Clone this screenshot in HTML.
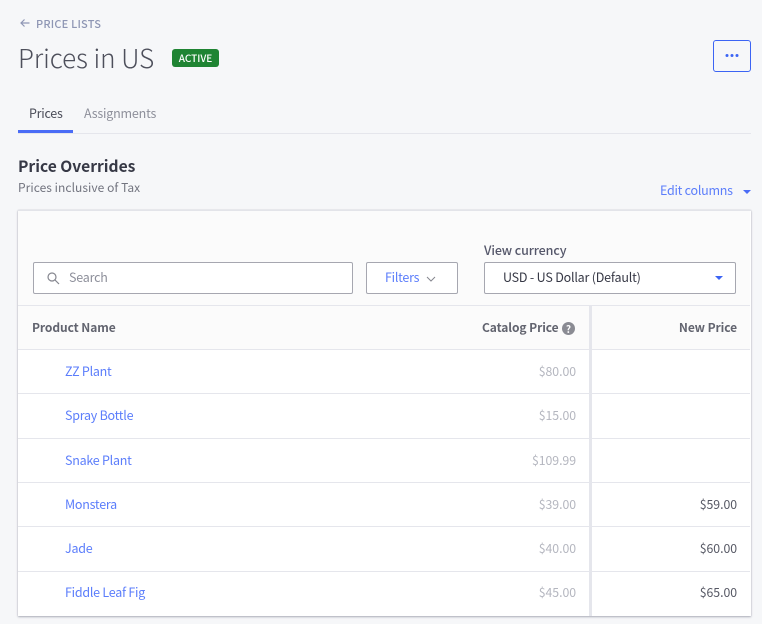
<!DOCTYPE html>
<html><head><meta charset="utf-8">
<style>
*{box-sizing:border-box}
html,body{margin:0;padding:0}
body{width:762px;height:624px;background:#f6f7f9;overflow:hidden;position:relative;font-family:"Noto Sans CJK JP","Liberation Sans",sans-serif;font-size:13px;color:#313440}
.a{position:absolute;white-space:nowrap;line-height:18px}
.b{position:absolute}
.l{color:#5b7dfb;letter-spacing:-.25px}
.g{color:#b4b6bf;text-align:right;width:80px;left:496px;font-size:12.3px;letter-spacing:-.05px}
.n{color:#565864;text-align:right;width:80px;left:657px;font-size:12.3px;letter-spacing:-.05px}
.h{font-size:12px;font-weight:700;color:#62646f;letter-spacing:-.08px}
.line{position:absolute;height:1px;background:#e5e6ec}
</style></head><body>
<svg class="b" style="left:19px;top:17px" width="12" height="12" viewBox="0 0 12 12" fill="none" stroke="#8e96b4" stroke-width="1.2"><path d="M10.5 6H2M5.5 2.5 2 6l3.5 3.5"/></svg>
<div class="a" style="left:36px;top:15px;font-size:11px;font-weight:500;color:#8e96b4;letter-spacing:.2px">PRICE LISTS</div>
<div class="a" style="left:18px;top:40px;font-size:26px;line-height:36px;font-weight:300;color:#4d4f5b;letter-spacing:-.05px">Prices in US</div>
<div class="a" style="left:172px;top:49px;width:47px;height:18px;background:#1f8433;border-radius:3px;color:#fff;font-size:10px;font-weight:500;text-align:center;line-height:18px">ACTIVE</div>
<div class="b" style="left:713px;top:40px;width:38px;height:32px;border:1px solid #3c64f4;border-radius:3px"></div>
<svg class="b" style="left:725px;top:53px" width="14" height="6" viewBox="0 0 14 6" fill="#3c64f4"><circle cx="2" cy="2.5" r="1.5"/><circle cx="7" cy="2.5" r="1.5"/><circle cx="12" cy="2.5" r="1.5"/></svg>
<div class="a" style="left:29px;top:104px;font-size:12.5px;color:#4a4c58;letter-spacing:-.25px">Prices</div>
<div class="a" style="left:84px;top:104px;font-size:12.5px;color:#8d8f9a;letter-spacing:-.2px">Assignments</div>
<div class="line" style="left:18px;top:133px;width:733px"></div>
<div class="b" style="left:18px;top:130px;width:55px;height:3px;background:#4a6cf6"></div>
<div class="a" style="left:18px;top:156px;font-size:15.6px;line-height:20px;font-weight:700;color:#363845">Price Overrides</div>
<div class="a" style="left:18px;top:179px;font-size:12px;color:#72747f;letter-spacing:.05px">Prices inclusive of Tax</div>
<div class="a l" style="left:660px;top:181px;font-size:12.5px">Edit columns</div>
<div class="b" style="left:743px;top:190px;width:0;height:0;border-left:4px solid transparent;border-right:4px solid transparent;border-top:4px solid #4a6cf6"></div>

<div class="b" style="left:18px;top:210px;width:733px;height:406px;background:#fff;border-top:1px solid #e3e4e9;box-shadow:0 1px 2px rgba(40,45,70,.34),0 0 1px rgba(40,45,70,.2)"></div>
<div class="b" style="left:18px;top:211px;width:732px;height:94px;background:#fbfbfb"></div>
<div class="line" style="left:18px;top:305px;width:732px;height:1px;background:#e5e6ec"></div>
<div class="b" style="left:18px;top:306px;width:732px;height:43px;background:#fbfbfb"></div>

<div class="b" style="left:33px;top:262px;width:320px;height:32px;background:#fff;border:1px solid #a6a7b0;border-radius:2px"></div>
<svg class="b" style="left:46px;top:271px" width="14" height="14" viewBox="0 0 14 14" fill="none" stroke="#85868f" stroke-width="1.2"><circle cx="6" cy="6" r="4"/><path d="M9 9l4 4"/></svg>
<div class="a" style="left:69px;top:268px;font-size:12.5px;color:#8d8f9a;letter-spacing:-.2px">Search</div>
<div class="b" style="left:366px;top:262px;width:92px;height:32px;background:#fff;border:1px solid #a6a7b0;border-radius:2px"></div>
<div class="a l" style="left:385px;top:268px;font-size:12.5px">Filters</div>
<svg class="b" style="left:426px;top:275px" width="10" height="8" viewBox="0 0 10 8" fill="none" stroke="#85868f" stroke-width="1"><path d="M1 2l4 4 4-4"/></svg>
<div class="a" style="left:484px;top:241px;font-size:12.5px;font-weight:500;color:#55576a;letter-spacing:-.1px">View currency</div>
<div class="b" style="left:484px;top:262px;width:252px;height:32px;background:#fff;border:1px solid #a6a7b0;border-radius:2px"></div>
<div class="a" style="left:503px;top:268px;font-size:12.5px;color:#363845;letter-spacing:-.2px">USD - US Dollar (Default)</div>
<div class="b" style="left:715px;top:276px;width:0;height:0;border-left:4px solid transparent;border-right:4px solid transparent;border-top:4px solid #3c64f4"></div>

<div class="a h" style="left:32px;top:319px">Product Name</div>
<div class="a h" style="left:482px;top:319px">Catalog Price</div>
<div class="b" style="left:562px;top:322px;width:13px;height:13px;border-radius:50%;background:#8a8b93;color:#fff;font-size:10px;font-weight:700;line-height:13px;text-align:center">?</div>
<div class="a h" style="left:657px;top:319px;width:80px;text-align:right">New Price</div>

<div class="line" style="left:18px;top:349px;width:732px"></div>
<div class="line" style="left:18px;top:393px;width:732px"></div>
<div class="line" style="left:18px;top:438px;width:732px"></div>
<div class="line" style="left:18px;top:482px;width:732px"></div>
<div class="line" style="left:18px;top:526px;width:732px"></div>
<div class="line" style="left:18px;top:571px;width:732px"></div>
<div class="b" style="left:589px;top:306px;width:3px;height:310px;background:#e5e6ec"></div>

<div class="a l" style="left:65px;top:362px;font-size:12.5px">ZZ Plant</div>
<div class="a l" style="left:65px;top:406px;font-size:12.5px">Spray Bottle</div>
<div class="a l" style="left:65px;top:451px;font-size:12.5px">Snake Plant</div>
<div class="a l" style="left:65px;top:495px;font-size:12.5px">Monstera</div>
<div class="a l" style="left:65px;top:539px;font-size:12.5px">Jade</div>
<div class="a l" style="left:65px;top:583px;font-size:12.5px">Fiddle Leaf Fig</div>

<div class="a g" style="top:362px">$80.00</div>
<div class="a g" style="top:406px">$15.00</div>
<div class="a g" style="top:451px">$109.99</div>
<div class="a g" style="top:495px">$39.00</div>
<div class="a g" style="top:539px">$40.00</div>
<div class="a g" style="top:583px">$45.00</div>
<div class="a n" style="top:495px">$59.00</div>
<div class="a n" style="top:539px">$60.00</div>
<div class="a n" style="top:583px">$65.00</div>
</body></html>
